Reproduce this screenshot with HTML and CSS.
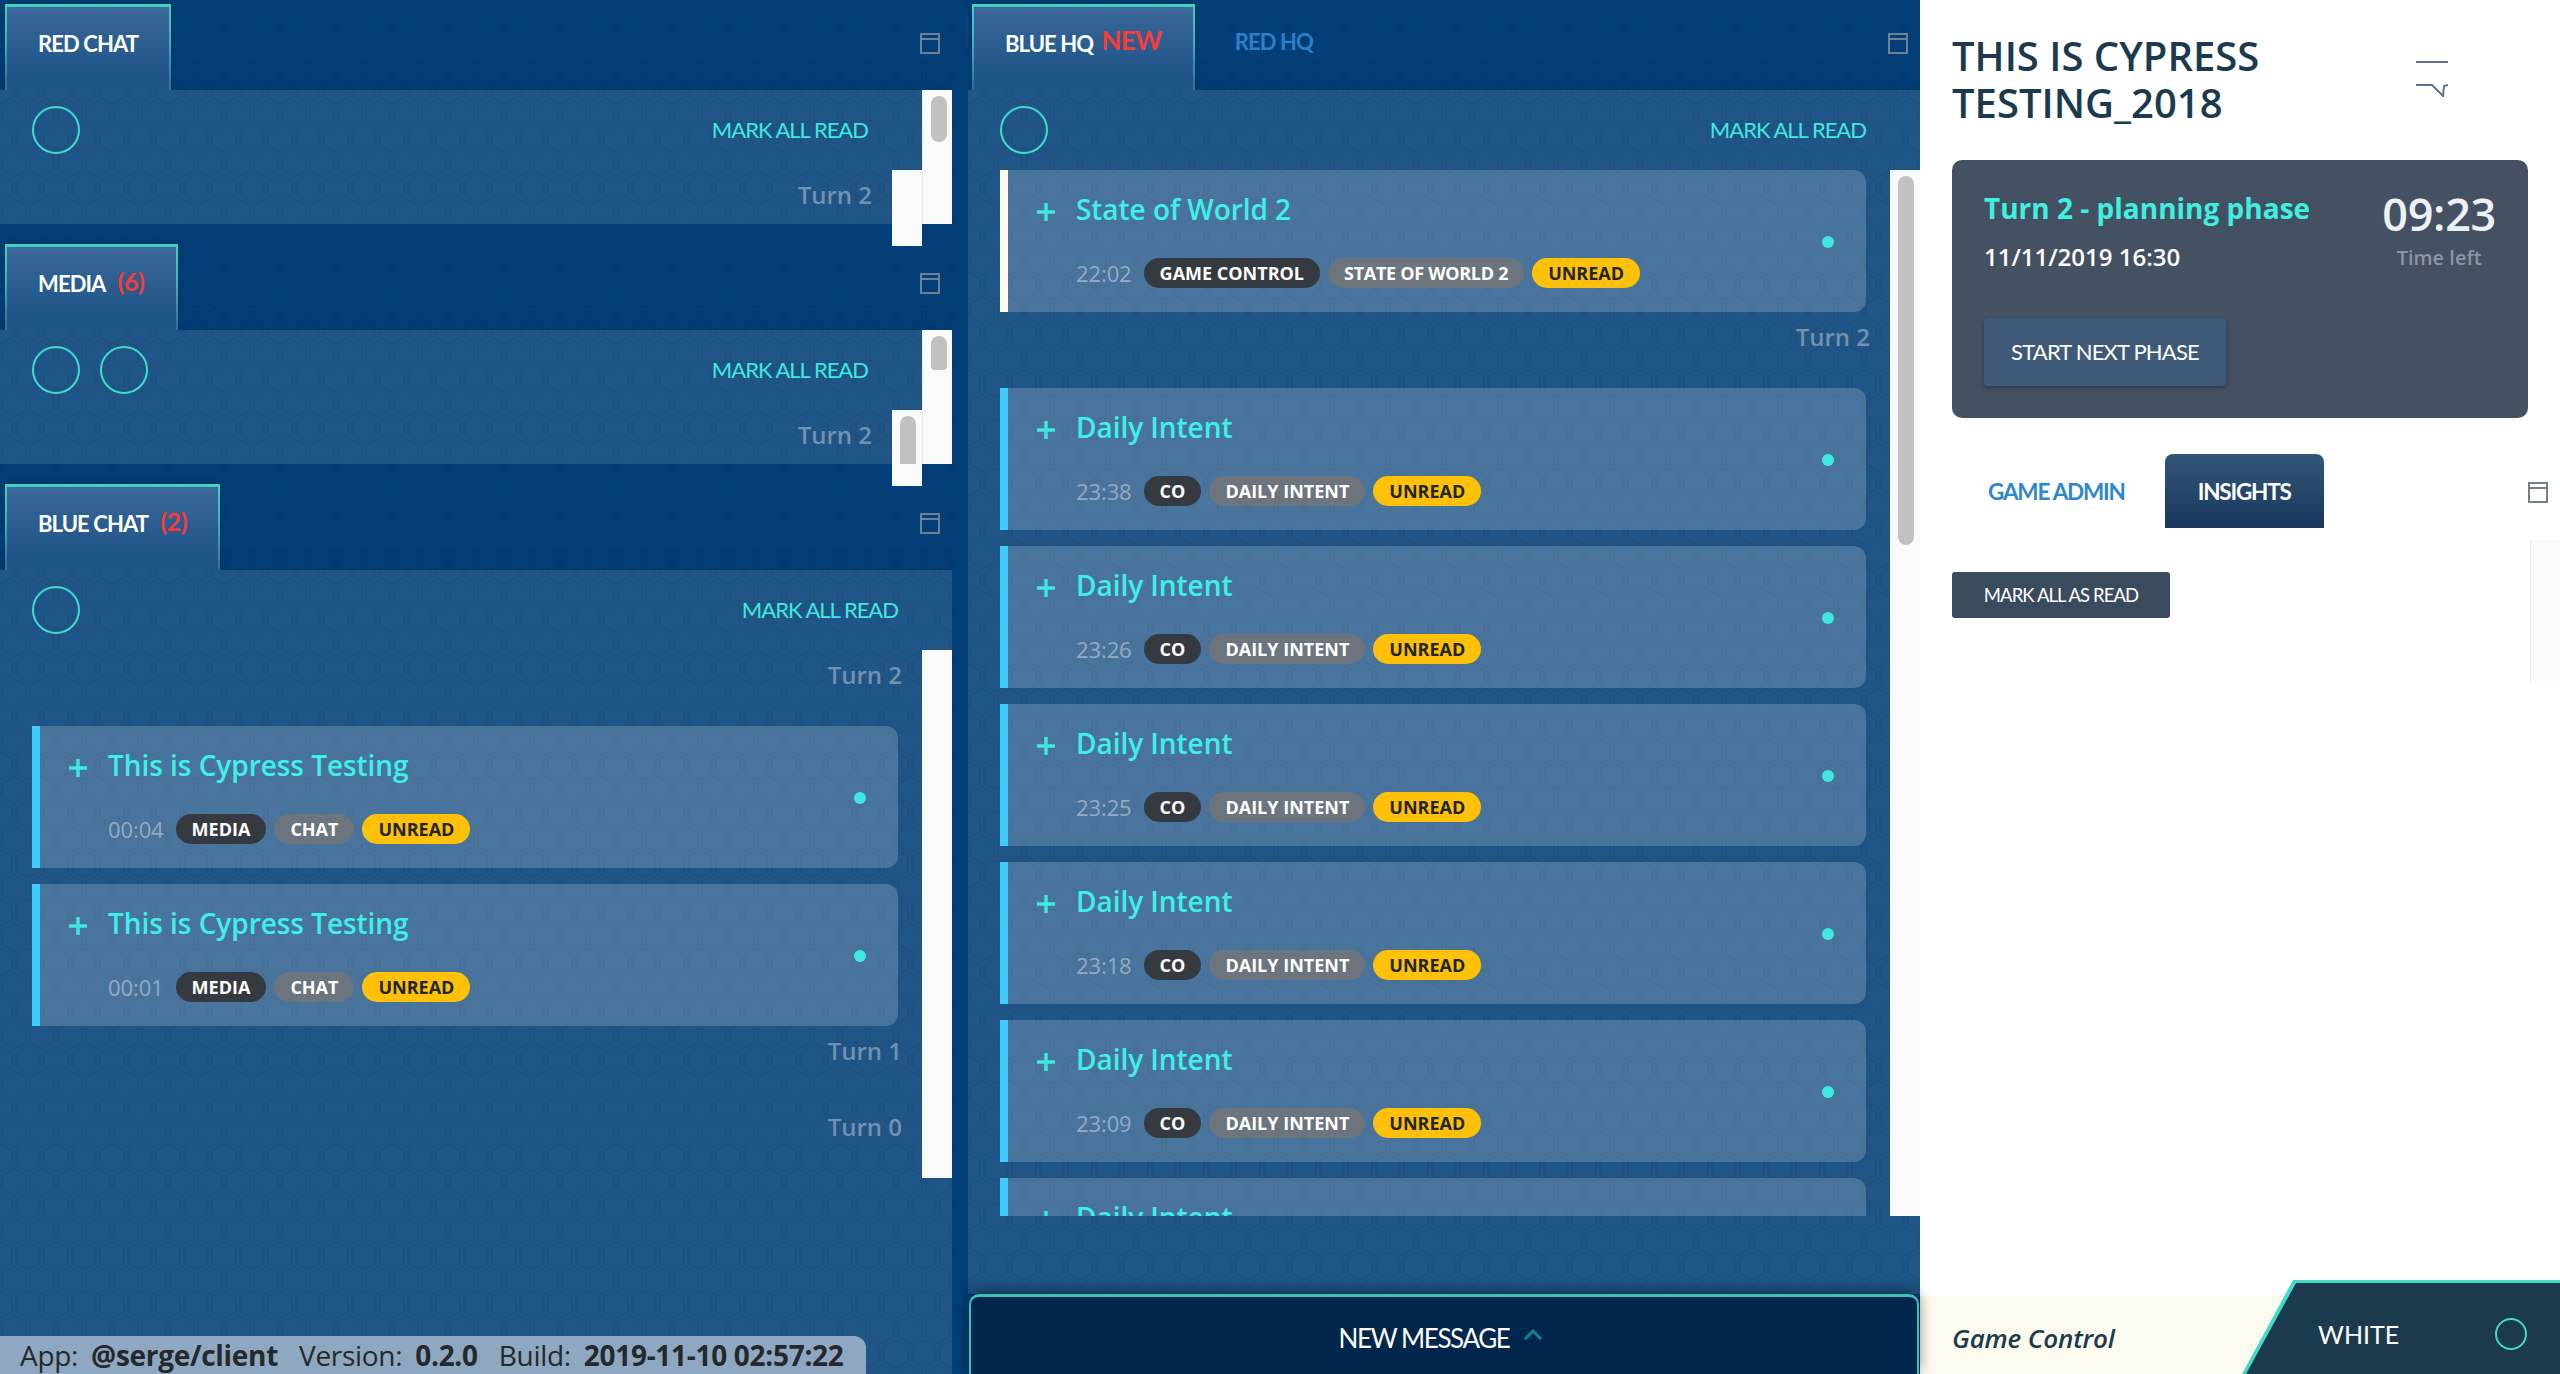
FILE: index.html
```
<!DOCTYPE html>
<html lang="en">
<head>
<meta charset="utf-8">
<title>Serge</title>
<link rel="stylesheet" href="styles.css">
</head>
<body>
<div class="app">
  <section class="col-left">
    <div class="tabset">
      <div class="tabbar"><div class="tab active">RED CHAT</div><svg class="win" viewBox="0 0 20 21"><path d="M1 1h18v19H1zM1 6h18"/></svg></div>
      <div class="panel short">
        <div class="pbody">
          <div class="ptop"><span class="ring"></span><span class="mark">MARK ALL READ</span></div>
          <div class="scroll">
            <div class="list"><div class="turn">Turn 2</div></div>
            <div class="bar"></div>
          </div>
        </div>
        <div class="bar edge"><div class="thumb t1"></div></div>
      </div>
    </div>
    <div class="tabset">
      <div class="tabbar"><div class="tab active">MEDIA<span class="count">(6)</span></div><svg class="win" viewBox="0 0 20 21"><path d="M1 1h18v19H1zM1 6h18"/></svg></div>
      <div class="panel short">
        <div class="pbody">
          <div class="ptop"><span class="ring"></span><span class="ring"></span><span class="mark">MARK ALL READ</span></div>
          <div class="scroll">
            <div class="list"><div class="turn">Turn 2</div></div>
            <div class="bar"><div class="thumb t3"></div></div>
          </div>
        </div>
        <div class="bar edge"><div class="thumb t2"></div></div>
      </div>
    </div>
    <div class="tabset grow">
      <div class="tabbar"><div class="tab active">BLUE CHAT<span class="count">(2)</span></div><svg class="win" viewBox="0 0 20 21"><path d="M1 1h18v19H1zM1 6h18"/></svg></div>
      <div class="panel tall">
        <div class="pbody">
          <div class="ptop"><span class="ring"></span><span class="mark">MARK ALL READ</span></div>
          <div class="scroll s528">
            <div class="list">
              <div class="turn">Turn 2</div>
              <article class="card">
                <svg class="plus" viewBox="0 0 18 18"><path d="M9 0v18M0 9h18"/></svg>
                <div class="cbody">
                  <h3 class="title">This is Cypress Testing</h3>
                  <div class="meta"><span class="time">00:04</span><span class="pill dark">MEDIA</span><span class="pill grey">CHAT</span><span class="pill yellow">UNREAD</span></div>
                </div>
                <span class="dot"></span>
              </article>
              <article class="card">
                <svg class="plus" viewBox="0 0 18 18"><path d="M9 0v18M0 9h18"/></svg>
                <div class="cbody">
                  <h3 class="title">This is Cypress Testing</h3>
                  <div class="meta"><span class="time">00:01</span><span class="pill dark">MEDIA</span><span class="pill grey">CHAT</span><span class="pill yellow">UNREAD</span></div>
                </div>
                <span class="dot"></span>
              </article>
              <div class="turn">Turn 1</div>
              <div class="turn">Turn 0</div>
            </div>
            <div class="bar"></div>
          </div>
        </div>
      </div>
    </div>
    <div class="version">App: <b>@serge/client</b><span class="vgap"></span>Version: <b>0.2.0</b><span class="vgap"></span>Build: <b>2019-11-10 02:57:22</b></div>
  </section>

  <section class="col-mid">
    <div class="tabbar">
      <div class="tab active">BLUE HQ<span class="new">NEW</span></div>
      <div class="tab plain">RED HQ</div>
      <svg class="win" viewBox="0 0 20 21"><path d="M1 1h18v19H1zM1 6h18"/></svg>
    </div>
    <div class="panel mid">
      <div class="pbody">
        <div class="ptop"><span class="ring"></span><span class="mark">MARK ALL READ</span></div>
        <div class="scroll s1046">
          <div class="list">
            <article class="card first">
              <svg class="plus" viewBox="0 0 18 18"><path d="M9 0v18M0 9h18"/></svg>
              <div class="cbody">
                <h3 class="title">State of World 2</h3>
                <div class="meta"><span class="time">22:02</span><span class="pill dark">GAME CONTROL</span><span class="pill grey tight">STATE OF WORLD 2</span><span class="pill yellow">UNREAD</span></div>
              </div>
              <span class="dot"></span>
            </article>
            <div class="turn">Turn 2</div>
            <article class="card">
              <svg class="plus" viewBox="0 0 18 18"><path d="M9 0v18M0 9h18"/></svg>
              <div class="cbody"><h3 class="title">Daily Intent</h3>
                <div class="meta"><span class="time">23:38</span><span class="pill dark">CO</span><span class="pill grey">DAILY INTENT</span><span class="pill yellow">UNREAD</span></div></div>
              <span class="dot"></span>
            </article>
            <article class="card">
              <svg class="plus" viewBox="0 0 18 18"><path d="M9 0v18M0 9h18"/></svg>
              <div class="cbody"><h3 class="title">Daily Intent</h3>
                <div class="meta"><span class="time">23:26</span><span class="pill dark">CO</span><span class="pill grey">DAILY INTENT</span><span class="pill yellow">UNREAD</span></div></div>
              <span class="dot"></span>
            </article>
            <article class="card">
              <svg class="plus" viewBox="0 0 18 18"><path d="M9 0v18M0 9h18"/></svg>
              <div class="cbody"><h3 class="title">Daily Intent</h3>
                <div class="meta"><span class="time">23:25</span><span class="pill dark">CO</span><span class="pill grey">DAILY INTENT</span><span class="pill yellow">UNREAD</span></div></div>
              <span class="dot"></span>
            </article>
            <article class="card">
              <svg class="plus" viewBox="0 0 18 18"><path d="M9 0v18M0 9h18"/></svg>
              <div class="cbody"><h3 class="title">Daily Intent</h3>
                <div class="meta"><span class="time">23:18</span><span class="pill dark">CO</span><span class="pill grey">DAILY INTENT</span><span class="pill yellow">UNREAD</span></div></div>
              <span class="dot"></span>
            </article>
            <article class="card">
              <svg class="plus" viewBox="0 0 18 18"><path d="M9 0v18M0 9h18"/></svg>
              <div class="cbody"><h3 class="title">Daily Intent</h3>
                <div class="meta"><span class="time">23:09</span><span class="pill dark">CO</span><span class="pill grey">DAILY INTENT</span><span class="pill yellow">UNREAD</span></div></div>
              <span class="dot"></span>
            </article>
            <article class="card">
              <svg class="plus" viewBox="0 0 18 18"><path d="M9 0v18M0 9h18"/></svg>
              <div class="cbody"><h3 class="title">Daily Intent</h3></div>
              <span class="dot"></span>
            </article>
          </div>
          <div class="bar"><div class="thumb t4"></div></div>
        </div>
      </div>
    </div>
    <div class="newmsg">NEW MESSAGE<svg class="caret" viewBox="0 0 20 12"><path d="M2 11l8-8 8 8"/></svg></div>
  </section>

  <aside class="col-right">
    <header class="rhead">
      <h1 class="gametitle">THIS IS CYPRESS TESTING_2018</h1>
      <svg class="menu" viewBox="0 0 32 36"><path d="M0 1h32M0 24h16l11 11 1-10 4-1"/></svg>
    </header>
    <div class="phase">
      <div class="phase-top">
        <div>
          <div class="phase-name">Turn 2 - planning phase</div>
          <div class="phase-date">11/11/2019 16:30</div>
        </div>
        <div class="clock">
          <div class="clock-time">09:23</div>
          <div class="clock-label">Time left</div>
        </div>
      </div>
      <button class="startbtn">START NEXT PHASE</button>
    </div>
    <div class="rtabs">
      <div class="rtab">GAME ADMIN</div>
      <div class="rtab on">INSIGHTS</div>
      <svg class="win rwin" viewBox="0 0 20 21"><path d="M1 1h18v19H1zM1 6h18"/></svg>
    </div>
    <div class="rbody">
      <div class="rmain"><button class="markbtn">MARK ALL AS READ</button></div>
      <div class="bar edge"></div>
    </div>
    <footer class="rfoot">
      <div class="role">Game Control</div>
      <div class="team"><div class="team-inner"><span class="team-name">WHITE</span><span class="ring small"></span></div></div>
    </footer>
  </aside>
</div>
</body>
</html>
```

FILE: styles.css
```
* { box-sizing: border-box; }
html, body { margin: 0; padding: 0; height: 100%; }
body {
  font-family: "Open Sans", sans-serif;
  background: #fff;
  overflow: hidden;
}
.app {
  display: flex;
  width: 2560px;
  height: 1374px;
  background-color: #023f79;
  background-image: url("data:image/svg+xml,%3Csvg xmlns='http://www.w3.org/2000/svg' width='28' height='49' viewBox='0 0 28 49'%3E%3Cpath fill='%23000' fill-opacity='0.05' d='M13.99 9.25l13 7.5v15l-13 7.5L1 31.75v-15l12.99-7.5zM3 17.9v12.7l10.99 6.34 11-6.35V17.9l-11-6.34L3 17.9zM0 15l12.98-7.5V0h-2v6.35L0 12.69v2.3zm0 18.5L12.98 41v8h-2v-6.85L0 35.81v-2.3zM15 0v7.5L27.99 15H28v-2.31h-.01L17 6.35V0h-2zm0 49v-8l12.99-7.5H28v2.31h-.01L17 42.15V49h-2z'/%3E%3C/svg%3E");
}
.col-left {
  position: relative;
  width: 952px;
  display: flex;
  flex-direction: column;
  gap: 16px;
}
.col-mid {
  width: 952px;
  margin-left: 16px;
  display: flex;
  flex-direction: column;
}
.col-right {
  width: 640px;
  background: #fff;
  padding-left: 32px;
  display: flex;
  flex-direction: column;
}
.tabset { display: flex; flex-direction: column; }
.grow { flex: 1; }

/* tab bar */
.tabbar {
  height: 90px;
  flex: none;
  display: flex;
  align-items: flex-end;
  padding-left: 5px;
  padding-right: 12px;
  background: linear-gradient(rgba(0,0,0,0) 60%, rgba(0,0,0,.05));
}
.col-mid .tabbar { padding-left: 4px; }
.tab {
  height: 86px;
  padding: 0 31px 10px;
  display: flex;
  align-items: center;
  font-family: Lato, sans-serif;
  font-weight: 700;
  font-size: 22px;
  letter-spacing: -.9px;
  color: #fff;
}
.tab.active {
  border: 2px solid #44c9bb;
  border-top-width: 3px;
  border-bottom: 0;
  border-image: linear-gradient(#44d0c0, #3fb3b0 45%, #2f6c96) 1;
  background-color: #1e5487;
  background-image: linear-gradient(#3a689a, #1e5487 85%);
  box-shadow: 0 -2px 6px rgba(0,0,0,.2);
}
.tab.plain { color: #2c7fc9; padding-left: 40px; padding-bottom: 12px; }
.count {
  color: #f83a3a;
  font-size: 25px;
  font-weight: 700;
  margin-left: 12px;
  letter-spacing: -.4px;
  transform: translateY(-3px);
}
.new {
  color: #f83a3a;
  font-size: 26px;
  margin-left: 8px;
  transform: translateY(-4px);
  letter-spacing: -.6px;
}
.win {
  width: 20px;
  height: 21px;
  margin-left: auto;
  margin-bottom: 36px;
  flex: none;
}
.win path { fill: none; stroke: #71808f; stroke-width: 2; }

/* panels */
.panel {
  display: flex;
  background-color: #1f5587;
  background-image: url("data:image/svg+xml,%3Csvg xmlns='http://www.w3.org/2000/svg' width='28' height='49' viewBox='0 0 28 49'%3E%3Cpath fill='%231d4a70' fill-opacity='0.3' d='M13.99 9.25l13 7.5v15l-13 7.5L1 31.75v-15l12.99-7.5zM3 17.9v12.7l10.99 6.34 11-6.35V17.9l-11-6.34L3 17.9zM0 15l12.98-7.5V0h-2v6.35L0 12.69v2.3zm0 18.5L12.98 41v8h-2v-6.85L0 35.81v-2.3zM15 0v7.5L27.99 15H28v-2.31h-.01L17 6.35V0h-2zm0 49v-8l12.99-7.5H28v2.31h-.01L17 42.15V49h-2z'/%3E%3C/svg%3E");
}
.short { height: 134px; }
.tall { flex: 1; }
.mid { flex: 1; }
.pbody { flex: 1; min-width: 0; }
.ptop {
  height: 80px;
  padding: 0 54px 0 32px;
  display: flex;
  align-items: center;
  gap: 20px;
}
.ring {
  width: 48px;
  height: 48px;
  border-radius: 50%;
  border: 2.5px solid #3fdcc8;
  flex: none;
}
.ring.small { width: 32px; height: 32px; }
.mark {
  margin-left: auto;
  margin-top: -2px;
  color: #3fe8e0;
  font-family: Lato, sans-serif;
  font-size: 22px;
  letter-spacing: -1px;
}
.scroll { display: flex; }
.s528 { height: 528px; }
.s1046 { height: 1046px; overflow: hidden; }
.list { flex: 1; min-width: 0; overflow: hidden; }
.bar {
  width: 30px;
  flex: none;
  background: #fafafa;
  padding: 6px 6px 0 8px;
}
.bar.edge { border-left: 1px solid #ececec; }
.thumb { background: #c1c1c1; border-radius: 8px; width: 16px; }
.t1 { height: 46px; }
.t2 { height: 34px; border-radius: 8px 8px 4px 4px; }
.t3 { height: 48px; border-radius: 8px 8px 0 0; }
.t4 { height: 369px; }

.turn {
  height: 50px;
  margin-bottom: 26px;
  padding: 0 20px 2px 0;
  display: flex;
  align-items: center;
  justify-content: flex-end;
  color: #7391ae;
  font-size: 24px;
  font-weight: 600;
}
.card + .turn { margin-top: -16px; }

/* cards */
.card {
  display: flex;
  height: 142px;
  margin: 0 24px 16px 32px;
  padding: 26px 0 0 29px;
  border-left: 8px solid #3ccdfc;
  border-radius: 0 12px 12px 0;
  background: rgba(255,255,255,.185);
}
.card.first { border-left-color: #fdfbf0; }
.plus {
  width: 18px;
  height: 18px;
  margin-top: 7px;
  flex: none;
}
.plus path { stroke: #3fe8e0; stroke-width: 3.4; fill: none; }
.cbody { margin-left: 21px; flex: 1; min-width: 0; }
.title {
  margin: 0;
  color: #3ff0e8;
  font-size: 28px;
  font-weight: 600;
  line-height: 28px;
  letter-spacing: -.05px;
  transform: translateY(-1px);
}
.meta {
  margin-top: 34px;
  display: flex;
  align-items: center;
}
.time {
  color: #94abc3;
  font-size: 22px;
  margin-right: 12px;
  letter-spacing: -.1px;
}
.pill {
  height: 30px;
  padding: 0 16px;
  border-radius: 15px;
  margin-right: 8px;
  display: flex;
  align-items: center;
  font-size: 18px;
  font-weight: 700;
  color: #fff;
}
.pill.tight { letter-spacing: -.3px; }
.dark { background: #343a40; }
.grey { background: #6c757d; }
.yellow { background: #ffc107; color: #212529; }
.dot {
  width: 12px;
  height: 12px;
  border-radius: 50%;
  background: #3fe8e0;
  flex: none;
  margin: 40px 32px 0 0;
}

/* version strip */
.version {
  position: absolute;
  left: 0;
  bottom: 0;
  width: 866px;
  height: 38px;
  padding-left: 20px;
  display: flex;
  align-items: center;
  white-space: pre;
  background: #8ea8c1;
  border-radius: 0 12px 0 0;
  color: #25282c;
  font-size: 28px;
  letter-spacing: -.3px;
}
.version b { font-weight: 700; margin-left: 6px; }
.vgap { width: 21px; }

/* new message */
.newmsg {
  height: 80px;
  flex: none;
  margin: 0 1px;
  padding: 5px 6px 0 0;
  display: flex;
  align-items: center;
  justify-content: center;
  gap: 14px;
  background: #02264c;
  border: 2px solid #3fc0b4;
  border-top-width: 3px;
  border-bottom: 0;
  border-radius: 10px 10px 0 0;
  box-shadow: 0 -3px 14px rgba(0,0,0,.45);
  color: #fff;
  font-family: Lato, sans-serif;
  font-size: 26px;
  letter-spacing: -1.4px;
  position: relative;
}
.caret { width: 20px; height: 12px; margin-bottom: 8px; }
.caret path { stroke: #12829b; stroke-width: 3; fill: none; }

/* right column */
.rhead {
  display: flex;
  justify-content: space-between;
  align-items: flex-start;
  padding-top: 32px;
  padding-right: 112px;
  height: 160px;
}
.gametitle {
  margin: 0;
  width: 340px;
  color: #1c3a4e;
  font-size: 40px;
  line-height: 47px;
  font-weight: 600;
}
.menu { width: 32px; height: 36px; margin-top: 29px; flex: none; }
.menu path { stroke: #5b7290; stroke-width: 2; fill: none; }
.phase {
  width: 576px;
  height: 258px;
  padding: 31px 32px 32px;
  background: #445162;
  border-radius: 10px;
  flex: none;
}
.phase-top { display: flex; justify-content: space-between; height: 127px; }
.phase-name {
  color: #3ff0e0;
  font-size: 28px;
  line-height: 34px;
  font-weight: 700;
}
.phase-date {
  color: #fff;
  font-size: 24px;
  font-weight: 600;
  line-height: 32px;
  margin-top: 16px;
}
.clock { text-align: center; padding-right: 0; }
.clock-time {
  color: #eef1f3;
  font-size: 45px;
  font-weight: 600;
  line-height: 46px;
  letter-spacing: -.3px;
}
.clock-label {
  color: #8a95a3;
  font-size: 20px;
  font-weight: 600;
  line-height: 26px;
  margin-top: 8px;
}
.startbtn {
  display: block;
  width: 242px;
  height: 68px;
  padding: 0 0 2px;
  border: 0;
  border-radius: 4px;
  background: #3f5a78;
  box-shadow: 0 2px 5px rgba(0,0,0,.3);
  color: #fff;
  font-family: Lato, sans-serif;
  font-size: 22px;
  letter-spacing: -.8px;
}
.rtabs {
  margin-top: 36px;
  margin-right: 12px;
  height: 74px;
  flex: none;
  display: flex;
  align-items: center;
}
.rtab {
  height: 74px;
  padding: 0 36px;
  display: flex;
  align-items: center;
  color: #2e86cc;
  font-family: Lato, sans-serif;
  font-weight: 700;
  font-size: 22.5px;
  letter-spacing: -1.2px;
}
.rtab.on {
  margin-left: 4px;
  padding: 0 33px;
  color: #fff;
  background: linear-gradient(#345678, #17385c);
  border-radius: 8px 8px 0 0;
}
.rwin { margin-bottom: 0; margin-top: 2px; }
.rbody {
  display: flex;
  height: 142px;
  margin-top: 12px;
  flex: none;
}
.rmain { flex: 1; padding-top: 32px; }
.markbtn {
  display: block;
  width: 218px;
  height: 46px;
  padding: 0;
  border: 0;
  border-radius: 3px;
  background: #3b4b5e;
  color: #fff;
  font-family: Lato, sans-serif;
  font-size: 18.5px;
  letter-spacing: -.9px;
}
.rfoot {
  margin-top: auto;
  margin-left: -32px;
  height: 94px;
  display: flex;
  align-items: flex-end;
}
.role {
  flex: 1;
  height: 78px;
  padding: 6px 0 0 32px;
  display: flex;
  align-items: center;
  background: #fcfaec;
  color: #1c3a4e;
  font-size: 26px;
  font-style: italic;
  font-weight: 600;
  letter-spacing: -.15px;
}
.team {
  width: 318px;
  height: 94px;
  margin-left: -51px;
  padding-top: 3px;
  display: flex;
  background: #3fdcc8;
  clip-path: polygon(51px 0, 100% 0, 100% 100%, 0 100%);
}
.team-inner {
  flex: 1;
  padding: 10px 33px 0 76px;
  display: flex;
  align-items: center;
  justify-content: space-between;
  background: #1c3a4e;
  clip-path: polygon(54px 0, 100% 0, 100% 100%, 4px 100%);
}
.team-name {
  color: #fff;
  font-family: Lato, sans-serif;
  font-size: 25px;
}
```
